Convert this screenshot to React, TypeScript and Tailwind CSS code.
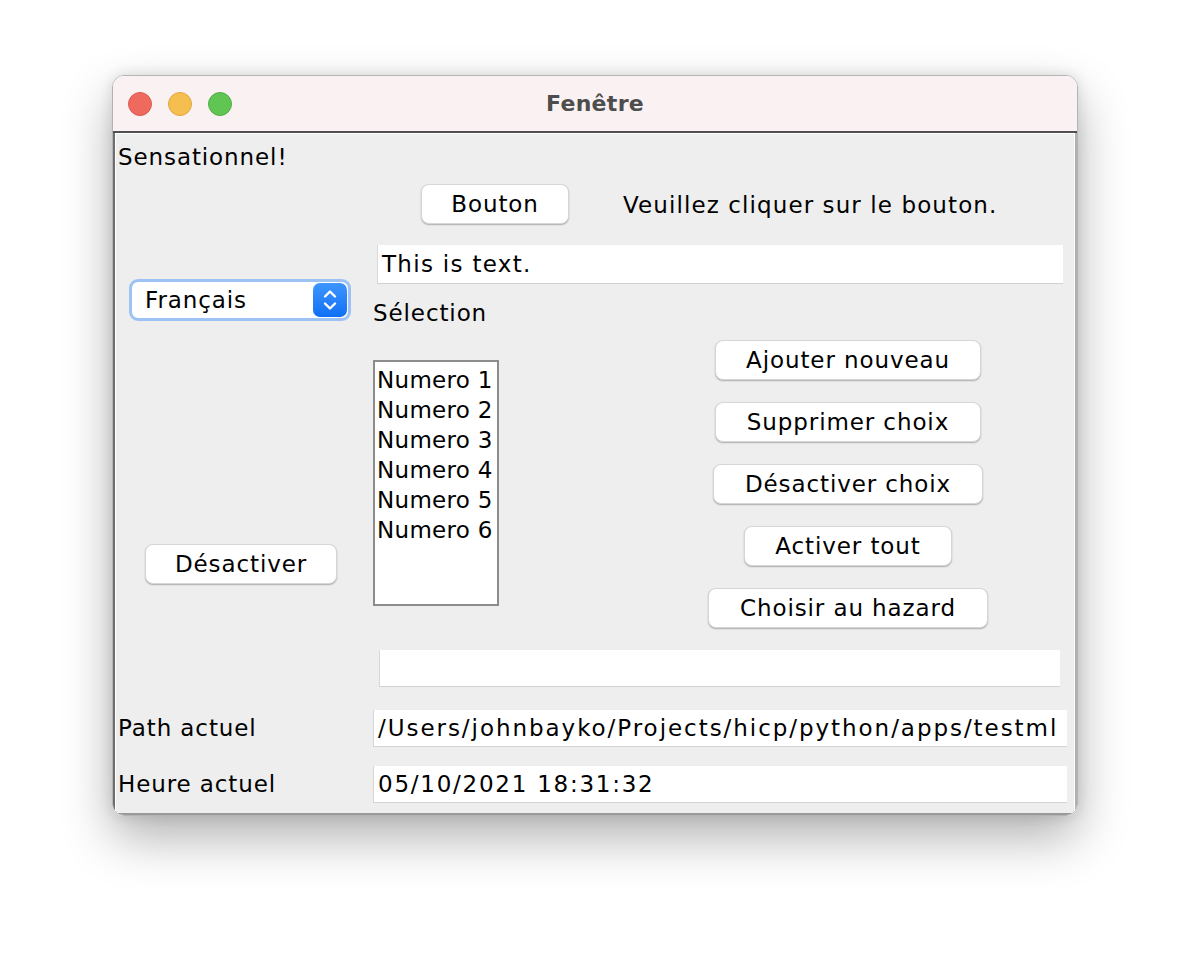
import React from 'react';

const font = { fontFamily: '"DejaVu Sans", "Liberation Sans", sans-serif' };

const MacButton = ({ label, className }: { label: string; className: string }) => (
  <div
    className={`flex h-[40px] items-center justify-center rounded-[8px] border border-[#d6d6d6] bg-white text-[23px] text-black shadow-[0_1px_1.5px_rgba(0,0,0,0.28)] ${className}`}
  >
    {label}
  </div>
);

const Field = ({ value, className }: { value?: string; className: string }) => (
  <div
    className={`flex h-[36px] items-center overflow-hidden whitespace-nowrap border-l border-[#d8d8d8] bg-white pl-[4px] text-[23px] text-black shadow-[0_1px_0_#d2d2d2] ${className}`}
  >
    {value}
  </div>
);

export default function App() {
  const items = ['Numero 1', 'Numero 2', 'Numero 3', 'Numero 4', 'Numero 5', 'Numero 6'];
  const actions = [
    { label: 'Ajouter nouveau', w: 'w-[266px]' },
    { label: 'Supprimer choix', w: 'w-[266px]' },
    { label: 'Désactiver choix', w: 'w-[270px]' },
    { label: 'Activer tout', w: 'w-[208px]' },
    { label: 'Choisir au hazard', w: 'w-[280px]' },
  ];

  return (
    <div className="min-h-[964px] w-[1190px] bg-white pl-[112px] pt-[75px]" style={font}>
      <div className="w-[966px] overflow-hidden rounded-[12px] border border-[#b4b4b4] shadow-[0_22px_50px_rgba(0,0,0,0.3),0_0_14px_rgba(0,0,0,0.12)]">
        {/* title bar */}
        <div className="relative flex h-[57px] items-center justify-center border-b-2 border-[#505050] bg-[#faf1f2]">
          <div className="absolute left-[15px] top-[16px] flex gap-[16px]">
            <span className="h-[24px] w-[24px] rounded-full border border-[#dd5a50] bg-[#ee6a5f]" />
            <span className="h-[24px] w-[24px] rounded-full border border-[#dfa83e] bg-[#f5bf4f]" />
            <span className="h-[24px] w-[24px] rounded-full border border-[#52ad46] bg-[#61c554]" />
          </div>
          <span className="text-[22px] font-bold tracking-[0.3px] text-[#4d4d4d]">Fenêtre</span>
        </div>

        {/* content */}
        <div className="border-b-2 border-l-2 border-r-2 border-b-[#9a9a9a] border-l-[#6e6e6e] border-r-[#b0b0b0] bg-[#eeeeee]">
          <div className="border-l border-r border-t border-white pb-[11px] text-[23px] tracking-[0.9px] text-black">
            <div className="mt-[8px] h-[30px] pl-[2px] leading-[30px]">Sensationnel!</div>

            <div className="mt-[12px] grid grid-cols-[257px_1fr]">
              <div />
              <div className="flex items-center">
                <MacButton label="Bouton" className="ml-[48px] w-[148px]" />
                <span className="ml-[54px] pt-[2px] tracking-[1.1px]">Veuillez cliquer sur le bouton.</span>
              </div>
            </div>

            <div className="grid grid-cols-[257px_1fr]">
              {/* left column */}
              <div className="flex flex-col">
                <div className="ml-[13px] mt-[55px] flex h-[42px] w-[222px] items-center justify-between rounded-[9px] border-[3px] border-[#9cc3f3] bg-white pl-[13px] pr-[1px]">
                  <span>Français</span>
                  <span className="flex h-[34px] w-[34px] items-center justify-center rounded-[7px] bg-gradient-to-b from-[#3d96fc] to-[#0d6ff5]">
                    <svg width="16" height="26" viewBox="0 0 16 26" fill="none" stroke="white" strokeWidth="2.4" strokeLinecap="round" strokeLinejoin="round">
                      <path d="M3 9.5 L8 4.5 L13 9.5" />
                      <path d="M3 16.5 L8 21.5 L13 16.5" />
                    </svg>
                  </span>
                </div>
                <MacButton label="Désactiver" className="ml-[29px] mt-[223px] w-[192px]" />
              </div>

              {/* right column */}
              <div className="flex flex-col">
                <Field value="This is text." className="ml-[4px] mt-[21px] !h-[38px] w-[686px] tracking-[1.3px]" />
                <div className="mt-[17px] h-[26px] leading-[26px]">Sélection</div>
                <div className="mt-[14px] flex items-start">
                  <div className="mt-[20px] h-[246px] w-[126px] border-2 border-[#8c8c8c] bg-white pl-[2px] pt-[3px] tracking-[0.3px]">
                    {items.map((it) => (
                      <div key={it} className="h-[30px] leading-[30px]">
                        {it}
                      </div>
                    ))}
                  </div>
                  <div className="ml-[199px] flex w-[300px] flex-col items-center gap-[22px]">
                    {actions.map((a) => (
                      <MacButton key={a.label} label={a.label} className={a.w} />
                    ))}
                  </div>
                </div>
                <Field className="ml-[6px] mt-[22px] w-[681px]" />
              </div>
            </div>

            <div className="mt-[24px] grid grid-cols-[257px_1fr] items-center">
              <span className="pl-[2px]">Path actuel</span>
              <Field value="/Users/johnbayko/Projects/hicp/python/apps/testml" className="w-[694px] tracking-[1.95px]" />
            </div>
            <div className="mt-[20px] grid grid-cols-[257px_1fr] items-center">
              <span className="pl-[2px]">Heure actuel</span>
              <Field value="05/10/2021 18:31:32" className="w-[694px] tracking-[1.75px]" />
            </div>
          </div>
        </div>
      </div>
    </div>
  );
}
